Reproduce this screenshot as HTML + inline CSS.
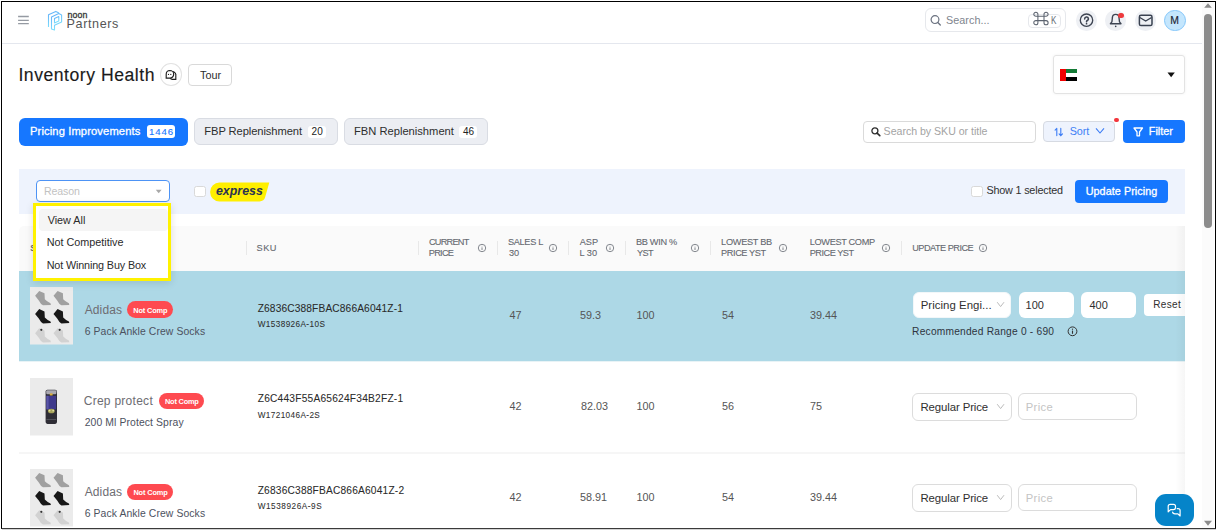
<!DOCTYPE html>
<html><head><meta charset="utf-8"><style>
html,body{margin:0;padding:0;background:#fff;width:1219px;height:531px;overflow:hidden;position:relative}
body{font-family:'Liberation Sans', sans-serif}
.t{position:absolute;line-height:1;white-space:pre}
</style></head><body>
<div style="position:absolute;left:1px;top:1px;width:1213px;height:526px;border:1px solid #000;border-bottom-color:#3a3a3a;"></div>
<div style="position:absolute;left:2px;top:529px;width:1214px;height:1px;background:#d4d4d4"></div>
<div style="position:absolute;left:2px;top:43px;width:1200px;height:1px;background:#e4e7ee"></div>
<svg style="position:absolute;left:16px;top:12px;" width="16" height="16" viewBox="0 0 16 16"><path d="M2.1,4.5 L12.8,4.5 M2.1,8.4 L12.8,8.4 M2.1,11.6 L12.8,11.6" stroke="#959aa2" stroke-width="1.35"/></svg>
<svg style="position:absolute;left:46px;top:9px;" width="18" height="23" viewBox="0 0 18 23"><defs><linearGradient id="lg" x1="0" y1="0" x2="0.4" y2="1"><stop offset="0" stop-color="#62acf8"/><stop offset="1" stop-color="#7fe3fc"/></linearGradient></defs>
<g fill="none" stroke="url(#lg)" stroke-width="1.1" stroke-linejoin="round">
<path d="M2.5,18 L2.5,5.8 L9.8,2.4 L13,4"/>
<path d="M5.5,20 L5.5,8 L12.8,4.6 L15.6,6 L15.6,13 L8.5,16.3 L8.5,21 Z"/>
<path d="M8.5,9.5 L12.8,7.6 L12.8,12 L8.5,13.9 Z"/>
</g></svg>
<div class="t" style="left:67.60px;top:10.80px;font-size:8.8px;color:#3a3a3a;-webkit-text-stroke:0.3px #3a3a3a;letter-spacing:0.067px;">noon</div>
<div class="t" style="left:66.60px;top:18.10px;font-size:12.6px;color:#555;letter-spacing:0.600px;">Partners</div>
<div style="position:absolute;left:925px;top:8px;width:141px;height:24px;border:1px solid #e6e8ec;border-radius:6px;box-sizing:border-box;background:#fff"></div>
<svg style="position:absolute;left:930px;top:15px;" width="12" height="11" viewBox="0 0 12 11"><circle cx="5" cy="4.6" r="3.9" fill="none" stroke="#6b7280" stroke-width="1.2"/><path d="M7.8,7.5 L10.3,10" stroke="#6b7280" stroke-width="1.3" stroke-linecap="round"/></svg>
<div class="t" style="left:946.00px;top:15.40px;font-size:10.8px;color:#80858e;letter-spacing:0.037px;">Search...</div>
<div style="position:absolute;left:1028px;top:13.5px;width:33px;height:14.5px;border:1px solid #e6e8ec;border-radius:4px;box-sizing:border-box"></div>
<svg style="position:absolute;left:1033px;top:11px;" width="16" height="16" viewBox="0 0 16 16"><path d="M4.9,5.3 L11,5.3 L11,9.6 L4.9,9.6 Z M4.9,5.3 L4.9,3.3 A2.05,2.05 0 1 0 2.85,5.3 Z M11,5.3 L13.05,5.3 A2.05,2.05 0 1 0 11,3.3 Z M11,9.6 L11,11.65 A2.05,2.05 0 1 0 13.05,9.6 Z M4.9,9.6 L2.85,9.6 A2.05,2.05 0 1 0 4.9,11.65 Z" fill="none" stroke="#5d6470" stroke-width="1.05"/></svg>
<div class="t" style="left:1051.00px;top:16.20px;font-size:10.2px;color:#6b7078;transform:scaleX(0.8);transform-origin:0 0;">K</div>
<div style="position:absolute;left:1076.0px;top:10px;width:20.6px;height:20.6px;background:#eef0f4;border-radius:50%"></div>
<div style="position:absolute;left:1105.0px;top:10px;width:20.6px;height:20.6px;background:#eef0f4;border-radius:50%"></div>
<div style="position:absolute;left:1135.2px;top:10px;width:20.6px;height:20.6px;background:#eef0f4;border-radius:50%"></div>
<svg style="position:absolute;left:1078px;top:12px;" width="17" height="17" viewBox="0 0 17 17"><circle cx="8.5" cy="8.2" r="6.2" fill="none" stroke="#3d4452" stroke-width="1.35"/><path d="M6.7,6.9 A1.85,1.85 0 1 1 9.3,8.5 C8.7,8.8 8.55,9.1 8.55,9.7" fill="none" stroke="#3d4452" stroke-width="1.6" stroke-linecap="round"/><circle cx="8.55" cy="11.7" r="0.85" fill="#3d4452"/></svg>
<svg style="position:absolute;left:1108px;top:12px;" width="16" height="16" viewBox="0 0 16 16"><path d="M2.4,11.7 L3.9,9.8 L4.4,5.7 A3.3,3.3 0 0 1 11,5.7 L11.5,9.8 L13,11.7 Z" fill="none" stroke="#3d4452" stroke-width="1.35" stroke-linejoin="round"/><circle cx="7.7" cy="14.4" r="0.8" fill="#3d4452"/></svg>
<div style="position:absolute;left:1118.3px;top:12.6px;width:5.4px;height:5.4px;background:#ee3a3d;border-radius:50%"></div>
<svg style="position:absolute;left:1138px;top:14px;" width="15" height="13" viewBox="0 0 15 13"><rect x="1.4" y="1.3" width="12.6" height="10.2" rx="1.6" fill="none" stroke="#394150" stroke-width="1.5"/><path d="M1.8,3.5 L7.7,7 L13.6,3.5" fill="none" stroke="#394150" stroke-width="1.4"/></svg>
<div style="position:absolute;left:1164.3px;top:10px;width:21.4px;height:21.4px;background:#c4e6fd;border:1px solid #85c7fa;border-radius:50%;box-sizing:border-box"></div>
<div class="t" style="left:1170.20px;top:16.20px;font-size:10.4px;color:#1c2433;-webkit-text-stroke:0.15px #1c2433;">M</div>
<div class="t" style="left:18.40px;top:66.50px;font-size:17.6px;color:#1b1b1b;-webkit-text-stroke:0.15px #1b1b1b;letter-spacing:0.533px;">Inventory Health</div>
<div style="position:absolute;left:160px;top:63.2px;width:22.2px;height:22.6px;border:1px solid #e2e2e2;border-radius:50%;box-sizing:border-box"></div>
<svg style="position:absolute;left:165px;top:69px;" width="12" height="12" viewBox="0 0 12 12"><path d="M4.9,1.5 A3.8,3.8 0 0 1 8.7,5.3 A3.8,3.8 0 0 1 4.9,9.1 L1.2,9.1 L1.2,5.3 A3.8,3.8 0 0 1 4.9,1.5 Z" fill="none" stroke="#1f1f1f" stroke-width="1.15"/><path d="M8,2.6 A3.6,3.6 0 0 1 10.8,7 L10.8,10.4 L7.3,10.4 A3.6,3.6 0 0 1 5.2,9.3" fill="none" stroke="#1f1f1f" stroke-width="1.15"/><circle cx="3.5" cy="5.4" r="0.6" fill="#1f1f1f"/><circle cx="5.8" cy="5.4" r="0.6" fill="#1f1f1f"/></svg>
<div style="position:absolute;left:188.3px;top:63.5px;width:43.4px;height:22.6px;border:1px solid #d9d9d9;border-radius:4px;box-sizing:border-box"></div>
<div class="t" style="left:200.00px;top:69.60px;font-size:10.8px;color:#2b2b2b;">Tour</div>
<div style="position:absolute;left:1053px;top:55px;width:131.5px;height:39px;border:1px solid #e3e3e3;border-radius:3px;box-sizing:border-box;box-shadow:0 0 3px rgba(0,0,0,0.06)"></div>
<div style="position:absolute;left:1066px;top:69px;width:11px;height:4px;background:#137a35"></div>
<div style="position:absolute;left:1066px;top:73px;width:11px;height:4px;background:#fff"></div>
<div style="position:absolute;left:1066px;top:77px;width:11px;height:4px;background:#000"></div>
<div style="position:absolute;left:1060px;top:69px;width:6px;height:12px;background:#f20000"></div>
<svg style="position:absolute;left:1167px;top:71.5px;" width="9" height="6" viewBox="0 0 9 6"><path d="M0.5,0.5 L7.8,0.5 L4.15,5.3 Z" fill="#111"/></svg>
<div style="position:absolute;left:19px;top:117.5px;width:169px;height:28.5px;background:#1677ff;border-radius:6px"></div>
<div class="t" style="left:30.00px;top:126.20px;font-size:11.2px;color:#ffffff;-webkit-text-stroke:0.3px #ffffff;letter-spacing:0.111px;">Pricing Improvements</div>
<div style="position:absolute;left:146.8px;top:125.3px;width:28px;height:12.5px;background:#fff;border-radius:3px"></div>
<div class="t" style="left:149.00px;top:127.00px;font-size:9.6px;color:#1677ff;-webkit-text-stroke:0.12px #1677ff;letter-spacing:0.933px;">1446</div>
<div style="position:absolute;left:194.2px;top:117.9px;width:143.5px;height:27.6px;background:#eceef3;border:1px solid #d9dce3;border-radius:6px;box-sizing:border-box"></div>
<div class="t" style="left:204.30px;top:126.20px;font-size:11.2px;color:#2e2e2e;letter-spacing:-0.094px;">FBP Replenishment</div>
<div style="position:absolute;left:308.4px;top:125.7px;width:17.4px;height:12px;background:#fff;border-radius:3px"></div>
<div class="t" style="left:311.60px;top:127.00px;font-size:10px;color:#222;">20</div>
<div style="position:absolute;left:344.2px;top:117.9px;width:144.3px;height:27.6px;background:#eceef3;border:1px solid #d9dce3;border-radius:6px;box-sizing:border-box"></div>
<div class="t" style="left:354.00px;top:126.20px;font-size:11.2px;color:#2e2e2e;letter-spacing:-0.012px;">FBN Replenishment</div>
<div style="position:absolute;left:459px;top:125.7px;width:18.4px;height:12px;background:#fff;border-radius:3px"></div>
<div class="t" style="left:463.00px;top:127.00px;font-size:10px;color:#222;">46</div>
<div style="position:absolute;left:862.8px;top:120.6px;width:173px;height:22.2px;border:1px solid #dadada;border-radius:4px;box-sizing:border-box;background:#fff"></div>
<svg style="position:absolute;left:870px;top:126px;" width="12" height="11" viewBox="0 0 12 11"><circle cx="4.9" cy="4.8" r="3" fill="none" stroke="#2c2c2c" stroke-width="1.3"/><path d="M7.1,7.1 L9.8,9.6" stroke="#2c2c2c" stroke-width="1.6" stroke-linecap="round"/></svg>
<div class="t" style="left:883.60px;top:125.60px;font-size:10.6px;color:#a3a3a3;letter-spacing:-0.019px;">Search by SKU or title</div>
<div style="position:absolute;left:1042.6px;top:120.5px;width:72.7px;height:21.7px;background:#eef3fd;border:1px solid #d6dae2;border-radius:4px;box-sizing:border-box"></div>
<svg style="position:absolute;left:1054px;top:127px;" width="10" height="10" viewBox="0 0 10 10"><path d="M2.8,8.6 L2.8,1.4 M1.1,3.1 L2.8,1.4" fill="none" stroke="#3b7cf5" stroke-width="1.1" stroke-linecap="round"/><path d="M6.8,1.4 L6.8,8.6 M5.1,6.9 L6.8,8.6 L8.5,6.9" fill="none" stroke="#3b7cf5" stroke-width="1.1" stroke-linecap="round"/></svg>
<div class="t" style="left:1069.70px;top:126.20px;font-size:10.8px;color:#3d7ff5;letter-spacing:-0.067px;">Sort</div>
<svg style="position:absolute;left:1095px;top:127px;" width="11" height="8" viewBox="0 0 11 8"><path d="M1,1.4 L5,6 L9,1.4" fill="none" stroke="#3b7cf5" stroke-width="1.1"/></svg>
<div style="position:absolute;left:1114.4px;top:118.1px;width:4.4px;height:4.4px;background:#f2353b;border-radius:50%"></div>
<div style="position:absolute;left:1123px;top:120.2px;width:61.6px;height:22.6px;background:#1677ff;border-radius:4px"></div>
<svg style="position:absolute;left:1133px;top:127px;" width="11" height="10" viewBox="0 0 11 10"><path d="M1,1 L9.5,1 L6.5,5 L6.5,8.8 L4,8.8 L4,5 Z" fill="none" stroke="#fff" stroke-width="1.3" stroke-linejoin="round"/></svg>
<div class="t" style="left:1148.80px;top:126.40px;font-size:10.8px;color:#ffffff;-webkit-text-stroke:0.3px #ffffff;">Filter</div>
<div style="position:absolute;left:19px;top:169.2px;width:1166px;height:44.8px;background:#eef3fd"></div>
<div style="position:absolute;left:36px;top:180.2px;width:134.3px;height:22.3px;background:#fff;border:1px solid #4d93f5;border-radius:4px;box-sizing:border-box"></div>
<div class="t" style="left:43.90px;top:186.20px;font-size:10.6px;color:#c2c2c2;letter-spacing:-0.100px;">Reason</div>
<svg style="position:absolute;left:155px;top:188.5px;" width="8" height="5" viewBox="0 0 8 5"><path d="M0.8,0.8 L6.6,0.8 L3.7,4.2 Z" fill="#a8a8a8"/></svg>
<div style="position:absolute;left:194.3px;top:186.1px;width:11.4px;height:11.4px;background:#fff;border:1px solid #d9d9d9;border-radius:2.5px;box-sizing:border-box"></div>
<svg style="position:absolute;left:210px;top:181.5px;" width="60" height="20" viewBox="0 0 60 20"><path d="M9.5,0.6 L59.3,0.6 L55.2,15 Q54,19.4 49.5,19.4 L9.5,19.4 A9.4,9.4 0 0 1 9.5,0.6 Z" fill="#ffef00"/></svg>
<div class="t" style="left:215.90px;top:184.60px;font-size:12.4px;color:#2b3352;font-weight:700;font-style:italic;letter-spacing:0.017px;">express</div>
<div style="position:absolute;left:971.2px;top:186.2px;width:11.4px;height:11px;background:#fff;border:1px solid #d9d9d9;border-radius:2.5px;box-sizing:border-box"></div>
<div class="t" style="left:986.40px;top:185.40px;font-size:10.8px;color:#303030;letter-spacing:-0.179px;">Show 1 selected</div>
<div style="position:absolute;left:1075px;top:179.9px;width:92.9px;height:23.1px;background:#1677ff;border-radius:4px"></div>
<div class="t" style="left:1085.70px;top:186.30px;font-size:10.8px;color:#ffffff;-webkit-text-stroke:0.3px #ffffff;letter-spacing:0.054px;">Update Pricing</div>
<div style="position:absolute;left:19px;top:225.7px;width:1166px;height:45.7px;background:#fafafa;border-radius:5px 0 0 0"></div>
<div style="position:absolute;left:245.7px;top:241px;width:1px;height:13.7px;background:#e8e8e8"></div>
<div style="position:absolute;left:417.8px;top:241px;width:1px;height:13.7px;background:#e8e8e8"></div>
<div style="position:absolute;left:497px;top:241px;width:1px;height:13.7px;background:#e8e8e8"></div>
<div style="position:absolute;left:567.6px;top:241px;width:1px;height:13.7px;background:#e8e8e8"></div>
<div style="position:absolute;left:624.5px;top:241px;width:1px;height:13.7px;background:#e8e8e8"></div>
<div style="position:absolute;left:710px;top:241px;width:1px;height:13.7px;background:#e8e8e8"></div>
<div style="position:absolute;left:901.1px;top:241px;width:1px;height:13.7px;background:#e8e8e8"></div>
<div class="t" style="left:30.30px;top:242.60px;font-size:9.6px;color:#6a6a6a;-webkit-text-stroke:0.3px #6a6a6a;">S</div>
<div class="t" style="left:256.60px;top:244.20px;font-size:9.2px;color:#64686f;-webkit-text-stroke:0.1px #64686f;letter-spacing:0.450px;">SKU</div>
<div class="t" style="left:429.00px;top:238.20px;font-size:9.2px;color:#64686f;-webkit-text-stroke:0.1px #64686f;letter-spacing:-0.767px;">CURRENT</div>
<div class="t" style="left:428.80px;top:248.90px;font-size:9.2px;color:#64686f;-webkit-text-stroke:0.1px #64686f;letter-spacing:-0.725px;">PRICE</div>
<div class="t" style="left:508.00px;top:238.20px;font-size:9.2px;color:#64686f;-webkit-text-stroke:0.1px #64686f;letter-spacing:-0.333px;">SALES L</div>
<div class="t" style="left:509.00px;top:248.90px;font-size:9.2px;color:#64686f;-webkit-text-stroke:0.1px #64686f;">30</div>
<div class="t" style="left:579.70px;top:238.20px;font-size:9.2px;color:#64686f;-webkit-text-stroke:0.1px #64686f;">ASP</div>
<div class="t" style="left:579.50px;top:248.90px;font-size:9.2px;color:#64686f;-webkit-text-stroke:0.1px #64686f;">L 30</div>
<div class="t" style="left:636.00px;top:238.20px;font-size:9.2px;color:#64686f;-webkit-text-stroke:0.1px #64686f;letter-spacing:-0.329px;">BB WIN %</div>
<div class="t" style="left:637.00px;top:248.90px;font-size:9.2px;color:#64686f;-webkit-text-stroke:0.1px #64686f;letter-spacing:-0.600px;">YST</div>
<div class="t" style="left:721.10px;top:238.20px;font-size:9.2px;color:#64686f;-webkit-text-stroke:0.1px #64686f;letter-spacing:-0.288px;">LOWEST BB</div>
<div class="t" style="left:721.10px;top:248.90px;font-size:9.2px;color:#64686f;-webkit-text-stroke:0.1px #64686f;letter-spacing:-0.425px;">PRICE YST</div>
<div class="t" style="left:809.70px;top:238.20px;font-size:9.2px;color:#64686f;-webkit-text-stroke:0.1px #64686f;letter-spacing:-0.330px;">LOWEST COMP</div>
<div class="t" style="left:809.70px;top:248.90px;font-size:9.2px;color:#64686f;-webkit-text-stroke:0.1px #64686f;letter-spacing:-0.500px;">PRICE YST</div>
<div class="t" style="left:912.20px;top:243.90px;font-size:9.2px;color:#64686f;-webkit-text-stroke:0.1px #64686f;letter-spacing:-0.518px;">UPDATE PRICE</div>
<svg style="position:absolute;left:477px;top:243.3px;" width="10" height="10" viewBox="0 0 10 10"><circle cx="5" cy="5" r="3.7" fill="none" stroke="#767a82" stroke-width="0.9"/><path d="M5,4.4 L5,7" stroke="#767a82" stroke-width="0.9"/><circle cx="5" cy="3.1" r="0.45" fill="#767a82"/></svg>
<svg style="position:absolute;left:548px;top:243.3px;" width="10" height="10" viewBox="0 0 10 10"><circle cx="5" cy="5" r="3.7" fill="none" stroke="#767a82" stroke-width="0.9"/><path d="M5,4.4 L5,7" stroke="#767a82" stroke-width="0.9"/><circle cx="5" cy="3.1" r="0.45" fill="#767a82"/></svg>
<svg style="position:absolute;left:605px;top:243.3px;" width="10" height="10" viewBox="0 0 10 10"><circle cx="5" cy="5" r="3.7" fill="none" stroke="#767a82" stroke-width="0.9"/><path d="M5,4.4 L5,7" stroke="#767a82" stroke-width="0.9"/><circle cx="5" cy="3.1" r="0.45" fill="#767a82"/></svg>
<svg style="position:absolute;left:690px;top:243.3px;" width="10" height="10" viewBox="0 0 10 10"><circle cx="5" cy="5" r="3.7" fill="none" stroke="#767a82" stroke-width="0.9"/><path d="M5,4.4 L5,7" stroke="#767a82" stroke-width="0.9"/><circle cx="5" cy="3.1" r="0.45" fill="#767a82"/></svg>
<svg style="position:absolute;left:778px;top:243.3px;" width="10" height="10" viewBox="0 0 10 10"><circle cx="5" cy="5" r="3.7" fill="none" stroke="#767a82" stroke-width="0.9"/><path d="M5,4.4 L5,7" stroke="#767a82" stroke-width="0.9"/><circle cx="5" cy="3.1" r="0.45" fill="#767a82"/></svg>
<svg style="position:absolute;left:880.6px;top:243.3px;" width="10" height="10" viewBox="0 0 10 10"><circle cx="5" cy="5" r="3.7" fill="none" stroke="#767a82" stroke-width="0.9"/><path d="M5,4.4 L5,7" stroke="#767a82" stroke-width="0.9"/><circle cx="5" cy="3.1" r="0.45" fill="#767a82"/></svg>
<svg style="position:absolute;left:977.9px;top:243.3px;" width="10" height="10" viewBox="0 0 10 10"><circle cx="5" cy="5" r="3.7" fill="none" stroke="#767a82" stroke-width="0.9"/><path d="M5,4.4 L5,7" stroke="#767a82" stroke-width="0.9"/><circle cx="5" cy="3.1" r="0.45" fill="#767a82"/></svg>
<div style="position:absolute;left:19px;top:271.2px;width:1166px;height:89.8px;background:#add8e6"></div>
<div style="position:absolute;left:19px;top:452px;width:1166px;height:2px;background:#f6f6f6"></div>
<div style="position:absolute;left:19px;top:361px;width:1166px;height:0.5px;background:#e8f3f6"></div>
<svg style="position:absolute;left:30.2px;top:287.1px;" width="43" height="57.5" viewBox="0 0 43 57.5"><rect width="43" height="57.5" fill="#ebebeb"/><path transform="translate(4.8,3.4)" d="M4.4,0.5 L9.7,2.8 L10,8.8 Q12,11 15.7,12.8 L16.1,14.5 L8.2,14.8 Q6,14 4,10 L0.3,5.4 Z" fill="#a0a0a0"/><path transform="translate(23.2,3.4)" d="M4.4,0.5 L9.7,2.8 L10,8.8 Q12,11 15.7,12.8 L16.1,14.5 L8.2,14.8 Q6,14 4,10 L0.3,5.4 Z" fill="#a0a0a0"/><path transform="translate(4.8,21.6)" d="M4.4,0.5 L9.7,2.8 L10,8.8 Q12,11 15.7,12.8 L16.1,14.5 L8.2,14.8 Q6,14 4,10 L0.3,5.4 Z" fill="#181818"/><path transform="translate(23.2,21.6)" d="M4.4,0.5 L9.7,2.8 L10,8.8 Q12,11 15.7,12.8 L16.1,14.5 L8.2,14.8 Q6,14 4,10 L0.3,5.4 Z" fill="#181818"/><path transform="translate(4.8,40.8)" d="M4.4,0.5 L9.7,2.8 L10,8.8 Q12,11 15.7,12.8 L16.1,14.5 L8.2,14.8 Q6,14 4,10 L0.3,5.4 Z" fill="#d2d2d2"/><circle cx="11.3" cy="42.8" r="1.1" fill="#333"/><path transform="translate(23.2,40.8)" d="M4.4,0.5 L9.7,2.8 L10,8.8 Q12,11 15.7,12.8 L16.1,14.5 L8.2,14.8 Q6,14 4,10 L0.3,5.4 Z" fill="#d2d2d2"/><circle cx="29.7" cy="42.8" r="1.1" fill="#333"/></svg>
<div class="t" style="left:84.70px;top:303.80px;font-size:12px;color:#6d6d72;letter-spacing:0.120px;">Adidas</div>
<div style="position:absolute;left:127.1px;top:301.4px;width:46.2px;height:16.7px;background:#fe4a50;border-radius:9px"></div>
<div class="t" style="left:133.20px;top:306.90px;font-size:7.4px;color:#fff;font-weight:700;letter-spacing:-0.143px;">Not Comp</div>
<div class="t" style="left:84.70px;top:327.20px;font-size:10.4px;color:#4c5160;letter-spacing:0.091px;">6 Pack Ankle Crew Socks</div>
<div class="t" style="left:257.70px;top:303.80px;font-size:10.2px;color:#2a2a2a;-webkit-text-stroke:0.06px #2a2a2a;letter-spacing:0.130px;">Z6836C388FBAC866A6041Z-1</div>
<div class="t" style="left:257.70px;top:320.90px;font-size:8.2px;color:#2e2e2e;-webkit-text-stroke:0.06px #2e2e2e;letter-spacing:0.400px;">W1538926A-10S</div>
<div class="t" style="left:509.60px;top:309.90px;font-size:10.8px;color:#555;">47</div>
<div class="t" style="left:580.00px;top:309.90px;font-size:10.8px;color:#555;">59.3</div>
<div class="t" style="left:636.60px;top:309.90px;font-size:10.8px;color:#555;">100</div>
<div class="t" style="left:721.90px;top:309.90px;font-size:10.8px;color:#555;">54</div>
<div class="t" style="left:810.00px;top:309.90px;font-size:10.8px;color:#555;">39.44</div>
<div style="position:absolute;left:912.7px;top:291.6px;width:98.6px;height:26.9px;background:#fff;border:1px solid #f2f7f9;border-radius:6px;box-sizing:border-box"></div>
<div class="t" style="left:920.70px;top:300.00px;font-size:11.4px;color:#2f2f2f;letter-spacing:0.043px;">Pricing Engi...</div>
<svg style="position:absolute;left:995.5px;top:301px;" width="10" height="8" viewBox="0 0 10 8"><path d="M1.2,1.2 L4.6,5.6 L8,1.2" fill="none" stroke="#bcbcbc" stroke-width="1"/></svg>
<div style="position:absolute;left:1018.6px;top:291.5px;width:55.3px;height:26.2px;background:#fff;border-radius:6px"></div>
<div class="t" style="left:1025.60px;top:300.00px;font-size:11px;color:#2f2f2f;">100</div>
<div style="position:absolute;left:1080.9px;top:291.5px;width:55px;height:26.2px;background:#fff;border-radius:6px"></div>
<div class="t" style="left:1089.50px;top:300.00px;font-size:11px;color:#2f2f2f;">400</div>
<div style="position:absolute;left:1143.7px;top:294px;width:50px;height:22.2px;background:#fff;border-radius:4px"></div>
<div class="t" style="left:1153.20px;top:299.60px;font-size:10px;color:#2f2f2f;letter-spacing:0.350px;">Reset</div>
<div class="t" style="left:912.10px;top:326.60px;font-size:10.2px;color:#2e3440;letter-spacing:0.225px;">Recommended Range 0 - 690</div>
<svg style="position:absolute;left:1067px;top:326px;" width="11" height="11" viewBox="0 0 11 11"><circle cx="5.5" cy="5.3" r="4.4" fill="none" stroke="#333" stroke-width="1"/><path d="M5.5,4.6 L5.5,7.8" stroke="#333" stroke-width="1.1"/><circle cx="5.5" cy="3.2" r="0.6" fill="#333"/></svg>
<svg style="position:absolute;left:30.2px;top:378.1px;" width="43" height="57.5" viewBox="0 0 43 57.5"><rect width="43" height="57.5" fill="#ebebeb"/><rect x="15.6" y="11.7" width="11.4" height="34.2" rx="1.8" fill="#2f2e36"/><rect x="16.2" y="12.3" width="10.2" height="4" rx="1.2" fill="#a9a8b0"/><rect x="19.8" y="15.4" width="2.8" height="2.2" fill="#d9ad38"/><rect x="16.4" y="17.8" width="9.8" height="13.6" fill="#3f3a8c"/><rect x="16.4" y="17.8" width="2.2" height="13.6" fill="#5a55a8"/><ellipse cx="21.3" cy="33" rx="3.4" ry="2.3" fill="#a6a35a"/><circle cx="19.6" cy="32.6" r="0.9" fill="#e4e0a0"/><circle cx="23.2" cy="32.6" r="0.9" fill="#e4e0a0"/><rect x="16.4" y="41" width="9.8" height="0.8" fill="#5a5962"/></svg>
<div class="t" style="left:83.70px;top:394.80px;font-size:12px;color:#6d6d72;letter-spacing:0.273px;">Crep protect</div>
<div style="position:absolute;left:159.2px;top:392.9px;width:45.1px;height:16px;background:#fe4a50;border-radius:9px"></div>
<div class="t" style="left:165.00px;top:398.30px;font-size:7.4px;color:#fff;font-weight:700;letter-spacing:-0.214px;">Not Comp</div>
<div class="t" style="left:84.70px;top:417.80px;font-size:10.4px;color:#4c5160;letter-spacing:0.100px;">200 Ml Protect Spray</div>
<div class="t" style="left:257.70px;top:394.30px;font-size:10.2px;color:#2a2a2a;-webkit-text-stroke:0.06px #2a2a2a;letter-spacing:0.217px;">Z6C443F55A65624F34B2FZ-1</div>
<div class="t" style="left:257.70px;top:411.70px;font-size:8.2px;color:#2e2e2e;-webkit-text-stroke:0.06px #2e2e2e;letter-spacing:0.391px;">W1721046A-2S</div>
<div class="t" style="left:509.60px;top:400.80px;font-size:10.8px;color:#555;">42</div>
<div class="t" style="left:581.00px;top:400.80px;font-size:10.8px;color:#555;">82.03</div>
<div class="t" style="left:636.60px;top:400.80px;font-size:10.8px;color:#555;">100</div>
<div class="t" style="left:721.90px;top:400.80px;font-size:10.8px;color:#555;">56</div>
<div class="t" style="left:810.00px;top:400.80px;font-size:10.8px;color:#555;">75</div>
<div style="position:absolute;left:912.3px;top:393.2px;width:99.5px;height:28.3px;background:#fff;border:1px solid #dcdcdc;border-radius:6px;box-sizing:border-box"></div>
<div class="t" style="left:920.50px;top:402.30px;font-size:11.4px;color:#2f2f2f;letter-spacing:-0.108px;">Regular Price</div>
<svg style="position:absolute;left:995.5px;top:403px;" width="10" height="8" viewBox="0 0 10 8"><path d="M1.2,1.2 L4.6,5.6 L8,1.2" fill="none" stroke="#bcbcbc" stroke-width="1"/></svg>
<div style="position:absolute;left:1017.9px;top:393.2px;width:119px;height:27.1px;background:#fff;border:1px solid #dcdcdc;border-radius:6px;box-sizing:border-box"></div>
<div class="t" style="left:1025.70px;top:402.30px;font-size:11.2px;color:#c4c4c4;letter-spacing:0.375px;">Price</div>
<svg style="position:absolute;left:30.2px;top:469.2px;" width="43" height="57.5" viewBox="0 0 43 57.5"><rect width="43" height="57.5" fill="#ebebeb"/><path transform="translate(4.8,3.4)" d="M4.4,0.5 L9.7,2.8 L10,8.8 Q12,11 15.7,12.8 L16.1,14.5 L8.2,14.8 Q6,14 4,10 L0.3,5.4 Z" fill="#a0a0a0"/><path transform="translate(23.2,3.4)" d="M4.4,0.5 L9.7,2.8 L10,8.8 Q12,11 15.7,12.8 L16.1,14.5 L8.2,14.8 Q6,14 4,10 L0.3,5.4 Z" fill="#a0a0a0"/><path transform="translate(4.8,21.6)" d="M4.4,0.5 L9.7,2.8 L10,8.8 Q12,11 15.7,12.8 L16.1,14.5 L8.2,14.8 Q6,14 4,10 L0.3,5.4 Z" fill="#181818"/><path transform="translate(23.2,21.6)" d="M4.4,0.5 L9.7,2.8 L10,8.8 Q12,11 15.7,12.8 L16.1,14.5 L8.2,14.8 Q6,14 4,10 L0.3,5.4 Z" fill="#181818"/><path transform="translate(4.8,40.8)" d="M4.4,0.5 L9.7,2.8 L10,8.8 Q12,11 15.7,12.8 L16.1,14.5 L8.2,14.8 Q6,14 4,10 L0.3,5.4 Z" fill="#d2d2d2"/><circle cx="11.3" cy="42.8" r="1.1" fill="#333"/><path transform="translate(23.2,40.8)" d="M4.4,0.5 L9.7,2.8 L10,8.8 Q12,11 15.7,12.8 L16.1,14.5 L8.2,14.8 Q6,14 4,10 L0.3,5.4 Z" fill="#d2d2d2"/><circle cx="29.7" cy="42.8" r="1.1" fill="#333"/></svg>
<div class="t" style="left:84.70px;top:486.30px;font-size:12px;color:#6d6d72;letter-spacing:0.120px;">Adidas</div>
<div style="position:absolute;left:127.3px;top:483.8px;width:46px;height:15.9px;background:#fe4a50;border-radius:9px"></div>
<div class="t" style="left:133.40px;top:489.20px;font-size:7.4px;color:#fff;font-weight:700;letter-spacing:-0.143px;">Not Comp</div>
<div class="t" style="left:84.70px;top:508.70px;font-size:10.4px;color:#4c5160;letter-spacing:0.091px;">6 Pack Ankle Crew Socks</div>
<div class="t" style="left:257.70px;top:486.00px;font-size:10.2px;color:#2a2a2a;-webkit-text-stroke:0.06px #2a2a2a;letter-spacing:0.183px;">Z6836C388FBAC866A6041Z-2</div>
<div class="t" style="left:257.70px;top:502.70px;font-size:8.2px;color:#2e2e2e;-webkit-text-stroke:0.06px #2e2e2e;letter-spacing:0.564px;">W1538926A-9S</div>
<div class="t" style="left:509.60px;top:492.00px;font-size:10.8px;color:#555;">42</div>
<div class="t" style="left:580.00px;top:492.00px;font-size:10.8px;color:#555;">58.91</div>
<div class="t" style="left:636.60px;top:492.00px;font-size:10.8px;color:#555;">100</div>
<div class="t" style="left:721.90px;top:492.00px;font-size:10.8px;color:#555;">54</div>
<div class="t" style="left:810.00px;top:492.00px;font-size:10.8px;color:#555;">39.44</div>
<div style="position:absolute;left:912.3px;top:483.9px;width:99.5px;height:27.7px;background:#fff;border:1px solid #dcdcdc;border-radius:6px;box-sizing:border-box"></div>
<div class="t" style="left:920.50px;top:493.00px;font-size:11.4px;color:#2f2f2f;letter-spacing:-0.108px;">Regular Price</div>
<svg style="position:absolute;left:995.5px;top:494px;" width="10" height="8" viewBox="0 0 10 8"><path d="M1.2,1.2 L4.6,5.6 L8,1.2" fill="none" stroke="#bcbcbc" stroke-width="1"/></svg>
<div style="position:absolute;left:1017.9px;top:484.4px;width:119px;height:26.6px;background:#fff;border:1px solid #dcdcdc;border-radius:6px;box-sizing:border-box"></div>
<div class="t" style="left:1025.70px;top:493.00px;font-size:11.2px;color:#c4c4c4;letter-spacing:0.375px;">Price</div>
<div style="position:absolute;left:1175px;top:225.7px;width:10px;height:300px;background:linear-gradient(to right, rgba(0,0,0,0), rgba(0,0,0,0.035))"></div>
<div style="position:absolute;left:1185px;top:160px;width:17px;height:367px;background:#fff"></div>
<div style="position:absolute;left:33px;top:203px;width:138.2px;height:78px;background:#fff;border:3px solid #fff200;box-sizing:border-box;box-shadow:0 2px 8px rgba(0,0,0,0.12)"></div>
<div style="position:absolute;left:39.3px;top:209px;width:128.3px;height:21.8px;background:#f5f5f5;border-radius:4px"></div>
<div class="t" style="left:47.70px;top:214.60px;font-size:10.8px;color:#2b2b2b;">View All</div>
<div class="t" style="left:46.70px;top:237.00px;font-size:10.8px;color:#2b2b2b;">Not Competitive</div>
<div class="t" style="left:46.70px;top:259.70px;font-size:10.8px;color:#2b2b2b;letter-spacing:-0.139px;">Not Winning Buy Box</div>
<div style="position:absolute;left:1202px;top:2px;width:12px;height:526px;background:#fbfbfb"></div>
<svg style="position:absolute;left:1203px;top:2px;" width="10" height="7" viewBox="0 0 10 7"><path d="M1.2,5.8 L5,1.2 L8.8,5.8 Z" fill="#8c8c8c"/></svg>
<svg style="position:absolute;left:1203px;top:519.5px;" width="10" height="7" viewBox="0 0 10 7"><path d="M1,0.8 L5,5.8 L9,0.8 Z" fill="#8c8c8c"/></svg>
<div style="position:absolute;left:1204px;top:13.5px;width:8px;height:214.3px;background:#8c8c8c;border-radius:4px"></div>
<div style="position:absolute;left:1154.7px;top:494.1px;width:39.2px;height:32px;background:#0584c9;border-radius:11px"></div>
<svg style="position:absolute;left:1166px;top:503px;" width="17" height="15" viewBox="0 0 17 15"><path d="M2.2,8.8 L2.2,3.3 Q2.2,1.3 4.2,1.3 L7.5,1.3 Q9.5,1.3 9.5,3.3 L9.5,4.6 Q9.5,6.6 7.5,6.6 L4.6,6.6 Z" fill="none" stroke="#fff" stroke-width="1.2" stroke-linejoin="round"/><path d="M11.2,5.6 L12.1,5.6 Q14.1,5.6 14.1,7.6 L14.1,13 L11.9,10.8 L9,10.8 Q6.6,10.8 6.6,9.1" fill="none" stroke="#fff" stroke-width="1.2" stroke-linejoin="round" stroke-linecap="round"/></svg>
</body></html>
